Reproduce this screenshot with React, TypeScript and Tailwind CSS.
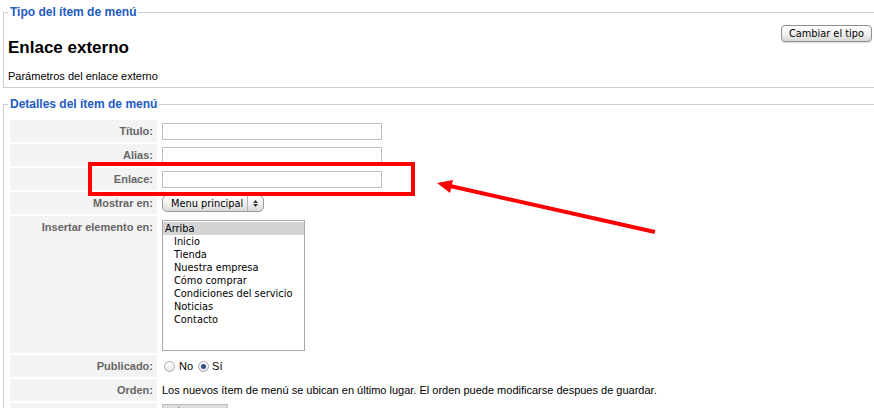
const menuItems = [
  'Inicio',
  'Tienda',
  'Nuestra empresa',
  'Cómo comprar',
  'Condiciones del servicio',
  'Noticias',
  'Contacto',
];

const sans = "font-['Liberation_Sans',Arial,sans-serif]";
const ctl = "font-['DejaVu_Sans',sans-serif] text-[9.8px]";

function Label({ children, top }: { children: React.ReactNode; top?: boolean }) {
  return (
    <div
      className={`w-[147px] shrink-0 bg-[#f3f3f3] pr-[4px] text-right text-[11px] font-bold text-[#666] flex justify-end ${
        top ? 'items-start pt-[3px]' : 'items-center'
      }`}
    >
      {children}
    </div>
  );
}

function Row({
  label,
  children,
  h = 'h-[22px]',
  top,
}: {
  label: string;
  children?: React.ReactNode;
  h?: string;
  top?: boolean;
}) {
  return (
    <div className={`flex gap-[1px] ${h}`}>
      <Label top={top}>{label}</Label>
      <div className={`flex-1 flex pl-[4px] ${top ? 'items-start pt-[4px]' : 'items-center'}`}>
        {children}
      </div>
    </div>
  );
}

function TextBox() {
  return <div className="w-[220px] h-[17px] border border-[#bdbdbd] bg-white" />;
}

function Radio({ checked }: { checked?: boolean }) {
  return (
    <span className="w-[11px] h-[11px] rounded-full border border-[#a8a8a8] bg-gradient-to-b from-white to-[#e8e8e8] flex items-center justify-center">
      {checked && <span className="w-[5px] h-[5px] rounded-full bg-[#2b4f85]" />}
    </span>
  );
}

export default function App() {
  return (
    <div className={`relative w-[874px] h-[408px] overflow-hidden bg-white text-black ${sans}`}>
      <div className="pt-[4px] pl-[3px]">
        <fieldset className="w-[878px] border border-[#cccccc] pl-[4px] pr-[8px] pb-[4px]">
          <legend className="px-[2px] text-[12px] font-bold text-[#215bc3] leading-[16px]">
            Tipo del ítem de menú
          </legend>
          <div className="flex justify-between items-start">
            <h2 className="mt-[17px] text-[17px] font-bold leading-[21px]">Enlace externo</h2>
            <button
              className={`mt-[5px] h-[17px] px-[7px] rounded-[4px] border border-[#8f8f8f] bg-gradient-to-b from-white via-[#f2f2f2] to-[#d9d9d9] shadow-[0_1px_1px_rgba(0,0,0,0.15)] ${ctl} leading-[15px]`}
            >
              Cambiar el tipo
            </button>
          </div>
          <p className="mt-[12px] text-[11px] leading-[13px]">Parámetros del enlace externo</p>
        </fieldset>

        <fieldset className="mt-[8px] w-[878px] border border-[#cccccc] pl-[6px] pt-[8px]">
          <legend className="px-[2px] ml-[-2px] text-[12px] font-bold text-[#215bc3] leading-[16px]">
            Detalles del ítem de menú
          </legend>
          <div className="flex flex-col gap-[2px]">
            <Row label="Título:">
              <TextBox />
            </Row>
            <Row label="Alias:">
              <TextBox />
            </Row>
            <Row label="Enlace:">
              <TextBox />
            </Row>
            <Row label="Mostrar en:">
              <div
                className={`flex items-center w-[102px] h-[17px] rounded-[5px] border border-[#9a9a9a] bg-gradient-to-b from-white via-[#f1f1f1] to-[#d8d8d8] ${ctl}`}
              >
                <span className="flex-1 pl-[8px] leading-[15px]">Menu principal</span>
                <span className="w-[16px] h-full border-l border-[#b5b5b5] flex flex-col items-center justify-center gap-[1px]">
                  <svg width="5" height="3" viewBox="0 0 5 3">
                    <path d="M2.5 0L5 3H0z" fill="#333" />
                  </svg>
                  <svg width="5" height="3" viewBox="0 0 5 3">
                    <path d="M0 0h5L2.5 3z" fill="#333" />
                  </svg>
                </span>
              </div>
            </Row>
            <Row label="Insertar elemento en:" h="h-[137px]" top>
              <div className={`w-[143px] h-[131px] border border-[#aaaaaa] bg-white ${ctl} leading-[13px] pt-[1px]`}>
                <div className="bg-[#d4d4d4] pl-[2px]">Arriba</div>
                {menuItems.map((m) => (
                  <div key={m} className="pl-[11px]">
                    {m}
                  </div>
                ))}
              </div>
            </Row>
            <Row label="Publicado:">
              <div className="flex items-center text-[11px] pl-[2px]">
                <Radio />
                <span className="ml-[4px] mr-[5px]">No</span>
                <Radio checked />
                <span className="ml-[3px]">Sí</span>
              </div>
            </Row>
            <Row label="Orden:">
              <span className="text-[11px]">
                Los nuevos ítem de menú se ubican en último lugar. El orden puede modificarse despues de guardar.
              </span>
            </Row>
            <Row label="Nivel de acceso:">
              <div className={`w-[66px] h-[17px] self-start mt-[1px] bg-[#dcdcdc] border border-[#bdbdbd] ${ctl} pl-[6px] leading-[15px]`}>
                Público
              </div>
            </Row>
          </div>
        </fieldset>
      </div>

      {/* annotation overlay */}
      <div className="absolute left-[88px] top-[162px] w-[327px] h-[34px] border-[4px] border-[#ff0000]" />
      <svg className="absolute left-0 top-0" width="874" height="408" viewBox="0 0 874 408">
        <line x1="655" y1="232" x2="450" y2="186" stroke="#ff0000" strokeWidth="4" />
        <polygon points="437,183 453,180 450,193" fill="#ff0000" />
      </svg>
    </div>
  );
}
